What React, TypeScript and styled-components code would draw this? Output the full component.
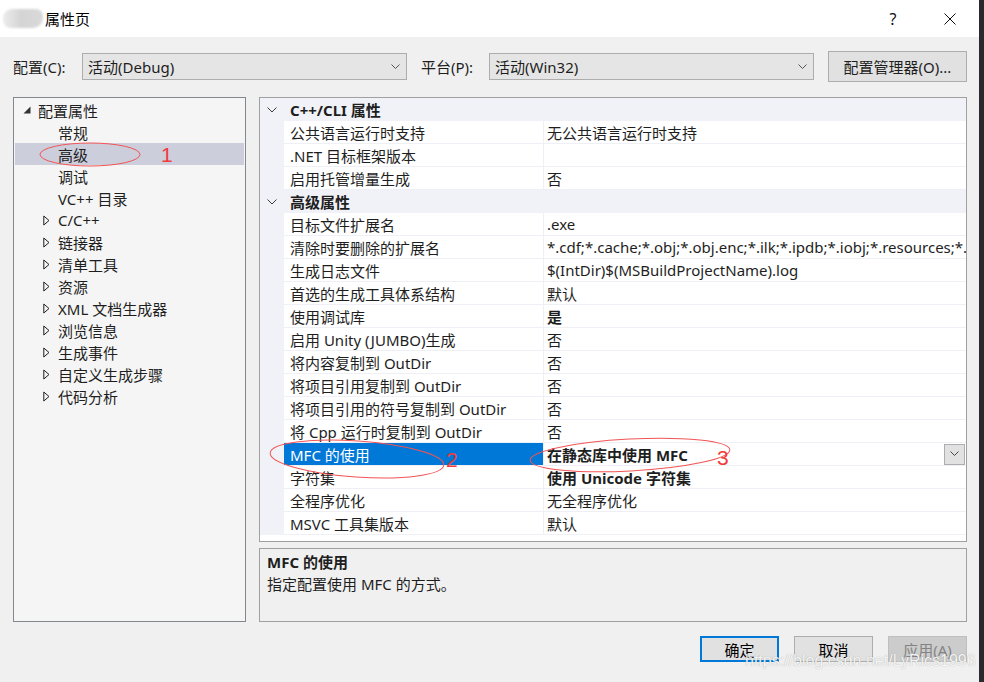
import React from 'react'
import styled, { createGlobalStyle } from 'styled-components'

const GlobalStyle = createGlobalStyle`
  html, body {
    margin: 0;
    padding: 0;
  }
  body {
    background: #262629;
    font-family: "Noto Sans", "Noto Sans CJK SC", sans-serif;
    font-size: 15px;
    color: #1e1e1e;
  }
  * {
    box-sizing: border-box;
  }
`

const Screen = styled.div`
  position: relative;
  width: 984px;
  height: 682px;
  display: flex;
  overflow: hidden;
`

const Window = styled.div`
  width: 979px;
  height: 682px;
  flex-shrink: 0;
  background: #f0f0f0;
  display: flex;
  flex-direction: column;
`

const DesktopEdge = styled.div`
  flex: 1;
  background: #2a2a2e;
`

const TitleBar = styled.div`
  height: 37px;
  background: #ffffff;
  display: flex;
  align-items: center;
  padding: 0 6px 0 3px;
`

const AppIcon = styled.div`
  width: 40px;
  height: 19px;
  border-radius: 9px 7px 10px 8px;
  background: linear-gradient(90deg, #ececec 0%, #d4d4d4 45%, #d9d9d9 100%);
  filter: blur(1.2px);
`

const Title = styled.span`
  margin-left: 2px;
  font-size: 15px;
  color: #000;
  flex: 1;
`

const CaptionButton = styled.div<{ $gap?: number }>`
  width: 46px;
  height: 37px;
  display: flex;
  align-items: center;
  justify-content: center;
  font-size: 16px;
  color: #111;
  margin-right: ${p => p.$gap ?? 0}px;
`

const Body = styled.div`
  flex: 1;
  display: flex;
  flex-direction: column;
  padding: 0 12px 0 13px;
`

const ConfigRow = styled.div`
  margin-top: 14px;
  height: 31px;
  display: flex;
  align-items: center;
`

const Label = styled.span<{ $w: number }>`
  width: ${p => p.$w}px;
  flex-shrink: 0;
  white-space: nowrap;
`

const Combo = styled.div<{ $w: number }>`
  width: ${p => p.$w}px;
  flex-shrink: 0;
  height: 27px;
  border: 1px solid #adadad;
  background: #e5e5e5;
  display: flex;
  align-items: center;
  padding: 0 6px 0 5px;
  margin-right: 14px;
  span {
    flex: 1;
  }
`

const ManagerButton = styled.div`
  width: 139px;
  flex-shrink: 0;
  height: 31px;
  border: 1px solid #adadad;
  background: #e1e1e1;
  display: flex;
  align-items: center;
  justify-content: center;
`

const MainArea = styled.div`
  margin-top: 15px;
  height: 525px;
  display: flex;
  gap: 13px;
`

const Tree = styled.div`
  width: 233px;
  flex-shrink: 0;
  border: 1px solid #828790;
  background: #f5f5f5;
  padding: 1px;
`

const TreeRow = styled.div<{ $level: number; $selected?: boolean }>`
  height: 22px;
  display: flex;
  align-items: center;
  padding-left: ${p => 8 + p.$level * 20}px;
  background: ${p => (p.$selected ? '#cccedb' : 'transparent')};
  white-space: nowrap;
`

const Expander = styled.span`
  width: 15px;
  height: 22px;
  display: flex;
  align-items: center;
`

const RightColumn = styled.div`
  flex: 1;
  min-width: 0;
  display: flex;
  flex-direction: column;
  gap: 6px;
`

const Grid = styled.div`
  height: 445px;
  border: 1px solid #a0a0a0;
  background: #ffffff;
  overflow: hidden;
`

const CategoryRow = styled.div`
  height: 23px;
  display: flex;
  align-items: center;
  background: #f0f2f8;
  font-weight: 700;
`

const Gutter = styled.div`
  width: 24px;
  height: 100%;
  display: flex;
  align-items: center;
  justify-content: center;
  background: #f0f2f8;
  flex-shrink: 0;
`

const CategoryTitle = styled.span`
  padding-left: 6px;
`

const PropRow = styled.div`
  height: 23px;
  display: flex;
`

const NameCell = styled.div<{ $selected?: boolean }>`
  width: 260px;
  flex-shrink: 0;
  padding-left: 6px;
  display: flex;
  align-items: center;
  white-space: nowrap;
  border-bottom: 1px solid #eef0f5;
  border-right: 1px solid #eef0f5;
  background: ${p => (p.$selected ? '#0078d7' : '#ffffff')};
  color: ${p => (p.$selected ? '#ffffff' : '#1e1e1e')};
`

const ValueCell = styled.div<{ $bold?: boolean }>`
  flex: 1;
  min-width: 0;
  padding-left: 3px;
  display: flex;
  align-items: center;
  border-bottom: 1px solid #eef0f5;
  font-weight: ${p => (p.$bold ? 700 : 400)};
  span {
    flex: 1;
    min-width: 0;
    overflow: hidden;
    white-space: nowrap;
  }
`

const DropButton = styled.div`
  width: 21px;
  height: 21px;
  margin-right: 1px;
  border: 1px solid #adadad;
  background: #e1e1e1;
  display: flex;
  align-items: center;
  justify-content: center;
  flex-shrink: 0;
`

const Description = styled.div`
  flex: 1;
  border: 1px solid #a0a0a0;
  background: #f0f0f0;
  padding: 2px 7px;
  line-height: 22px;
`

const DescTitle = styled.div`
  font-weight: 700;
`

const ButtonRow = styled.div`
  margin-top: 14px;
  display: flex;
  justify-content: flex-end;
  gap: 15px;
`

const DialogButton = styled.div<{ $variant?: 'default' | 'disabled' }>`
  width: 79px;
  height: 26px;
  display: flex;
  align-items: center;
  justify-content: center;
  background: ${p => (p.$variant === 'disabled' ? '#cccccc' : '#e1e1e1')};
  color: ${p => (p.$variant === 'disabled' ? '#838383' : '#000')};
  border: ${p =>
    p.$variant === 'default' ? '2px solid #0078d7' : p.$variant === 'disabled' ? '1px solid #bfbfbf' : '1px solid #adadad'};
`

const Annotations = styled.svg`
  position: absolute;
  left: 0;
  top: 0;
  pointer-events: none;
`

const Mark = styled.span<{ $x: number; $y: number }>`
  position: absolute;
  left: ${p => p.$x}px;
  top: ${p => p.$y}px;
  color: #f23b3b;
  font-family: "Liberation Sans", sans-serif;
  font-size: 21px;
  line-height: 21px;
`

const Watermark = styled.span`
  position: absolute;
  left: 745px;
  top: 652px;
  font-family: "Liberation Sans", sans-serif;
  font-size: 16px;
  color: rgba(255, 255, 255, 0.9);
  text-shadow: 0 0 1px rgba(90, 90, 90, 0.55);
  pointer-events: none;
`

const Chevron = ({ w = 9, color = '#555' }: { w?: number; color?: string }) => (
  <svg width={w} height={w / 2 + 1} viewBox={`0 0 ${w} ${w / 2 + 1}`}>
    <polyline points={`0.5,0.5 ${w / 2},${w / 2} ${w - 0.5},0.5`} fill="none" stroke={color} strokeWidth="1" />
  </svg>
)

const OpenTriangle = () => (
  <svg width="8" height="8" viewBox="0 0 8 8">
    <path d="M7.5 0.5 V7.5 H0.5 Z" fill="#333" />
  </svg>
)

const ClosedTriangle = () => (
  <svg width="7" height="11" viewBox="0 0 7 11">
    <path d="M0.8 1 L6 5.5 L0.8 10 Z" fill="none" stroke="#1e1e1e" strokeWidth="1" />
  </svg>
)

type TreeItem = { label: string; level: number; kind?: 'open' | 'closed'; selected?: boolean }

const treeItems: TreeItem[] = [
  { label: '配置属性', level: 0, kind: 'open' },
  { label: '常规', level: 1 },
  { label: '高级', level: 1, selected: true },
  { label: '调试', level: 1 },
  { label: 'VC++ 目录', level: 1 },
  { label: 'C/C++', level: 1, kind: 'closed' },
  { label: '链接器', level: 1, kind: 'closed' },
  { label: '清单工具', level: 1, kind: 'closed' },
  { label: '资源', level: 1, kind: 'closed' },
  { label: 'XML 文档生成器', level: 1, kind: 'closed' },
  { label: '浏览信息', level: 1, kind: 'closed' },
  { label: '生成事件', level: 1, kind: 'closed' },
  { label: '自定义生成步骤', level: 1, kind: 'closed' },
  { label: '代码分析', level: 1, kind: 'closed' },
]

type Prop = { name: string; value: string; bold?: boolean; selected?: boolean }

const sections: { title: string; rows: Prop[] }[] = [
  {
    title: 'C++/CLI 属性',
    rows: [
      { name: '公共语言运行时支持', value: '无公共语言运行时支持' },
      { name: '.NET 目标框架版本', value: '' },
      { name: '启用托管增量生成', value: '否' },
    ],
  },
  {
    title: '高级属性',
    rows: [
      { name: '目标文件扩展名', value: '.exe' },
      { name: '清除时要删除的扩展名', value: '*.cdf;*.cache;*.obj;*.obj.enc;*.ilk;*.ipdb;*.iobj;*.resources;*.tlb;*.tli' },
      { name: '生成日志文件', value: '$(IntDir)$(MSBuildProjectName).log' },
      { name: '首选的生成工具体系结构', value: '默认' },
      { name: '使用调试库', value: '是', bold: true },
      { name: '启用 Unity (JUMBO)生成', value: '否' },
      { name: '将内容复制到 OutDir', value: '否' },
      { name: '将项目引用复制到 OutDir', value: '否' },
      { name: '将项目引用的符号复制到 OutDir', value: '否' },
      { name: '将 Cpp 运行时复制到 OutDir', value: '否' },
      { name: 'MFC 的使用', value: '在静态库中使用 MFC', bold: true, selected: true },
      { name: '字符集', value: '使用 Unicode 字符集', bold: true },
      { name: '全程序优化', value: '无全程序优化' },
      { name: 'MSVC 工具集版本', value: '默认' },
    ],
  },
]

const App = () => {
  return (
    <Screen>
      <GlobalStyle />
      <Window>
        <TitleBar>
          <AppIcon />
          <Title>属性页</Title>
          <CaptionButton $gap={11}>?</CaptionButton>
          <CaptionButton>
            <svg width="12" height="12" viewBox="0 0 12 12">
              <path d="M0.5 0.5 L11.5 11.5 M11.5 0.5 L0.5 11.5" stroke="#111" strokeWidth="1" />
            </svg>
          </CaptionButton>
        </TitleBar>
        <Body>
          <ConfigRow>
            <Label $w={69}>配置(C):</Label>
            <Combo $w={325}>
              <span>活动(Debug)</span>
              <Chevron />
            </Combo>
            <Label $w={68}>平台(P):</Label>
            <Combo $w={325}>
              <span>活动(Win32)</span>
              <Chevron />
            </Combo>
            <ManagerButton>配置管理器(O)...</ManagerButton>
          </ConfigRow>

          <MainArea>
            <Tree>
              {treeItems.map(item => (
                <TreeRow key={item.label} $level={item.level} $selected={item.selected}>
                  <Expander>
                    {item.kind === 'open' && <OpenTriangle />}
                    {item.kind === 'closed' && <ClosedTriangle />}
                  </Expander>
                  {item.label}
                </TreeRow>
              ))}
            </Tree>

            <RightColumn>
              <Grid>
                {sections.map(section => (
                  <React.Fragment key={section.title}>
                    <CategoryRow>
                      <Gutter>
                        <Chevron w={10} color="#3c3c3c" />
                      </Gutter>
                      <CategoryTitle>{section.title}</CategoryTitle>
                    </CategoryRow>
                    {section.rows.map(row => (
                      <PropRow key={row.name}>
                        <Gutter />
                        <NameCell $selected={row.selected}>{row.name}</NameCell>
                        <ValueCell $bold={row.bold}>
                          <span>{row.value}</span>
                          {row.selected && (
                            <DropButton>
                              <Chevron w={9} color="#444" />
                            </DropButton>
                          )}
                        </ValueCell>
                      </PropRow>
                    ))}
                  </React.Fragment>
                ))}
              </Grid>
              <Description>
                <DescTitle>MFC 的使用</DescTitle>
                <div>指定配置使用 MFC 的方式。</div>
              </Description>
            </RightColumn>
          </MainArea>

          <ButtonRow>
            <DialogButton $variant="default">确定</DialogButton>
            <DialogButton>取消</DialogButton>
            <DialogButton $variant="disabled">应用(A)</DialogButton>
          </ButtonRow>
        </Body>
      </Window>
      <DesktopEdge />

      <Annotations width="984" height="682" viewBox="0 0 984 682">
        <ellipse cx="90" cy="154.5" rx="50" ry="11.5" fill="none" stroke="#f25454" strokeWidth="1" />
        <ellipse cx="357" cy="459" rx="87" ry="18" fill="none" stroke="#f25454" strokeWidth="1" transform="rotate(4 357 459)" />
        <ellipse cx="630" cy="455" rx="100" ry="16" fill="none" stroke="#f25454" strokeWidth="1" transform="rotate(-3 630 455)" />
      </Annotations>
      <Mark $x={161} $y={144}>1</Mark>
      <Mark $x={446} $y={449}>2</Mark>
      <Mark $x={717} $y={447}>3</Mark>
      <Watermark>https://blog.csdn.net/LyRics1996</Watermark>
    </Screen>
  )
}

export default App
